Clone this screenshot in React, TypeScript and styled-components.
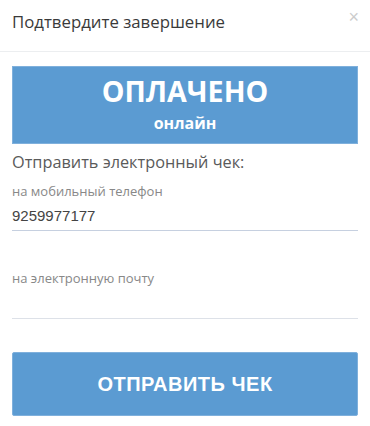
import React from 'react'
import styled, { createGlobalStyle } from 'styled-components'

const GlobalStyle = createGlobalStyle`
  html, body {
    margin: 0;
    padding: 0;
    background: #fff;
  }
  * {
    box-sizing: border-box;
  }
`

const Modal = styled.div`
  width: 370px;
  height: 426px;
  background: #fff;
  font-family: 'Open Sans', sans-serif;
  position: relative;
`

const Header = styled.div`
  height: 52px;
  padding: 10px 12px 0;
  display: flex;
  align-items: flex-start;
  border-bottom: 1px solid #eceef0;
`

const Title = styled.h4`
  margin: 0;
  font-size: 16.8px;
  line-height: 24px;
  font-weight: 400;
  color: #3a3a3a;
`

const Close = styled.button`
  position: absolute;
  top: 8px;
  right: 11px;
  border: none;
  background: none;
  padding: 0;
  font-family: 'Liberation Sans', Arial, sans-serif;
  font-size: 18px;
  line-height: 18px;
  color: #cccccc;
  cursor: pointer;
`

const Body = styled.div`
  padding: 14px 12px 0;
  display: flex;
  flex-direction: column;
`

const Paid = styled.div`
  height: 78px;
  background: #5b9bd2;
  border: 1px solid #7fb0dc;
  display: flex;
  flex-direction: column;
  align-items: center;
  justify-content: center;
  color: #fff;
`

const PaidTitle = styled.div`
  font-size: 28.6px;
  font-weight: 700;
  line-height: 34px;
  margin-top: -2px;
`

const PaidSub = styled.div`
  font-size: 16px;
  font-weight: 700;
  line-height: 22px;
  margin-top: 4px;
`

const Lead = styled.div`
  margin-top: 7px;
  font-size: 16.3px;
  color: #5a5a5a;
  line-height: 22px;
`

const Field = styled.div<{ $gap: number }>`
  margin-top: ${({ $gap }) => $gap}px;
  display: flex;
  flex-direction: column;
`

const Label = styled.label`
  font-size: 13px;
  color: #888;
  line-height: 18px;
`

const Input = styled.input<{ $line: string; $offset: number }>`
  border: none;
  border-bottom: 1px solid ${({ $line }) => $line};
  outline: none;
  padding: 0;
  margin-top: ${({ $offset }) => $offset}px;
  height: 30px;
  font-family: 'Liberation Sans', Arial, sans-serif;
  font-size: 15px;
  color: #444;
  background: transparent;
`

const Submit = styled.button`
  margin-top: 33px;
  height: 64px;
  border: 1px solid #7fb0dc;
  border-radius: 2px;
  background: #5b9bd2;
  color: #fff;
  font-family: 'Liberation Sans', Arial, sans-serif;
  font-weight: 700;
  font-size: 20px;
  letter-spacing: 0.5px;
  cursor: pointer;
`

export default function App() {
  return (
    <Modal>
      <GlobalStyle />
      <Header>
        <Title>Подтвердите завершение</Title>
      </Header>
      <Close aria-label="Закрыть">×</Close>
      <Body>
        <Paid>
          <PaidTitle>ОПЛАЧЕНО</PaidTitle>
          <PaidSub>онлайн</PaidSub>
        </Paid>
        <Lead>Отправить электронный чек:</Lead>
        <Field $gap={9}>
          <Label>на мобильный телефон</Label>
          <Input $line="#c6d0e0" $offset={1} defaultValue="9259977177" />
        </Field>
        <Field $gap={38}>
          <Label>на электронную почту</Label>
          <Input $line="#dde1e8" $offset={2} defaultValue="" />
        </Field>
        <Submit>ОТПРАВИТЬ ЧЕК</Submit>
      </Body>
    </Modal>
  )
}
